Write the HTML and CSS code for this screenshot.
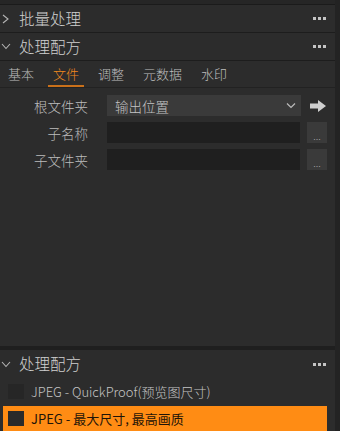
FILE: index.html
```html
<!DOCTYPE html>
<html lang="zh">
<head>
<meta charset="utf-8">
<link rel="stylesheet" href="styles.css">
</head>
<body>
<div class="app">
  <div class="main">
    <div class="topstrip"></div>
    <div class="header">
      <span class="chev">
        <svg width="9" height="10" viewBox="0 0 9 10"><path d="M2 1 L7 5 L2 9" fill="none" stroke="#b5b5b5" stroke-width="1.1"/></svg>
      </span>
      <span class="title">批量处理</span>
      <span class="dots"><i></i><i></i><i></i></span>
    </div>
    <div class="header">
      <span class="chev">
        <svg width="10" height="9" viewBox="0 0 10 9"><path d="M1 2 L5 6.5 L9 2" fill="none" stroke="#b5b5b5" stroke-width="1.1"/></svg>
      </span>
      <span class="title">处理配方</span>
      <span class="dots"><i></i><i></i><i></i></span>
    </div>
    <div class="tabs">
      <span class="tab">基本</span>
      <span class="tab active">文件</span>
      <span class="tab">调整</span>
      <span class="tab">元数据</span>
      <span class="tab">水印</span>
    </div>
    <div class="form">
      <div class="row">
        <span class="label">根文件夹</span>
        <div class="select">
          <span>输出位置</span>
          <svg width="10" height="7" viewBox="0 0 10 7"><path d="M1 1.5 L5 5.5 L9 1.5" fill="none" stroke="#bbbbbb" stroke-width="1.2"/></svg>
        </div>
        <span class="go">
          <svg width="16" height="12" viewBox="0 0 16 12"><path d="M0 3.5 H8 V0 L16 6 L8 12 V8.5 H0 Z" fill="#cfcfcf"/></svg>
        </span>
      </div>
      <div class="row">
        <span class="label">子名称</span>
        <div class="input"></div>
        <span class="btn">...</span>
      </div>
      <div class="row">
        <span class="label">子文件夹</span>
        <div class="input"></div>
        <span class="btn">...</span>
      </div>
    </div>
    <div class="spacer"></div>
    <div class="sep"></div>
    <div class="header h3">
      <span class="chev">
        <svg width="10" height="9" viewBox="0 0 10 9"><path d="M1 2 L5 6.5 L9 2" fill="none" stroke="#b5b5b5" stroke-width="1.1"/></svg>
      </span>
      <span class="title">处理配方</span>
      <span class="dots"><i></i><i></i><i></i></span>
    </div>
    <div class="list">
      <div class="item"><span class="box"></span><span>JPEG - QuickProof(预览图尺寸)</span></div>
      <div class="item sel"><span class="box"></span><span>JPEG - 最大尺寸, 最高画质</span></div>
    </div>
  </div>
  <div class="scroll"></div>
</div>
</body>
</html>
```
FILE: styles.css
```css
html, body {
  margin: 0;
  padding: 0;
  background: #2c2c2c;
  font-family: "Noto Sans CJK SC", "Open Sans", sans-serif;
  font-weight: 300;
  color: #c6c6c6;
}
.app {
  display: flex;
  width: 340px;
  height: 431px;
  overflow: hidden;
}
.main {
  width: 335px;
  display: flex;
  flex-direction: column;
}
.scroll {
  width: 5px;
  background: #232323;
}
.topstrip {
  height: 4px;
  background: #262626;
  border-bottom: 1px solid #1b1b1b;
}
.header {
  height: 27px;
  display: flex;
  align-items: center;
  border-bottom: 1px solid #1d1d1d;
  padding: 0 9px 0 1px;
}
.chev {
  width: 18px;
  display: flex;
  align-items: center;
}
.title {
  font-size: 15.5px;
  color: #d0d0d0;
  flex: 1;
  line-height: 1;
}
.dots {
  display: flex;
  gap: 2px;
}
.dots i {
  width: 3px;
  height: 3px;
  background: #c4c4c4;
  display: block;
}
.tabs {
  height: 26px;
  display: flex;
  align-items: stretch;
  padding-left: 3px;
  gap: 9px;
  border-bottom: 1px solid #222;
}
.tab {
  font-size: 13px;
  color: #bdbdbd;
  padding: 0 5px;
  display: flex;
  align-items: center;
  border-bottom: 2px solid transparent;
}
.tab.active {
  color: #f08a1e;
  border-bottom-color: #c9701a;
}
.form {
  display: flex;
  flex-direction: column;
  gap: 6px;
  padding-top: 7px;
}
.row {
  display: flex;
  align-items: center;
  height: 21px;
}
.label {
  width: 88px;
  text-align: right;
  font-size: 13.5px;
  color: #bcbcbc;
  margin-right: 19px;
}
.select {
  width: 194px;
  height: 21px;
  background: #3a3a3a;
  display: flex;
  align-items: center;
  justify-content: space-between;
  padding: 0 5px 0 8px;
  box-sizing: border-box;
  font-size: 13.5px;
  color: #c4c4c4;
}
.go {
  margin-left: 9px;
  display: flex;
  align-items: center;
}
.input {
  width: 193px;
  height: 21px;
  background: #1f1f1f;
}
.btn {
  width: 20px;
  height: 21px;
  margin-left: 7px;
  background: #3a3a3a;
  font-size: 10px;
  color: #aaa;
  display: flex;
  align-items: flex-end;
  justify-content: center;
  line-height: 14px;
}
.spacer {
  flex: 1;
}
.sep {
  height: 4px;
  background: #1f1f1f;
}
.h3 {
  height: 28px;
  border-bottom: none;
}
.list {
  display: flex;
  flex-direction: column;
  padding-top: 2px;
  gap: 3px;
}
.item {
  height: 23px;
  display: flex;
  align-items: center;
  font-size: 13px;
  color: #c4c4c4;
  margin-left: 3px;
  width: 324px;
  padding-left: 5px;
  box-sizing: border-box;
}
.box {
  width: 16px;
  height: 15px;
  background: #262626;
  margin-right: 7px;
}
.item.sel {
  background: #ff8c14;
  color: #1e1408;
  height: 25px;
  font-weight: 400;
}
.item.sel .box {
  background: #2a2a2a;
}
```
